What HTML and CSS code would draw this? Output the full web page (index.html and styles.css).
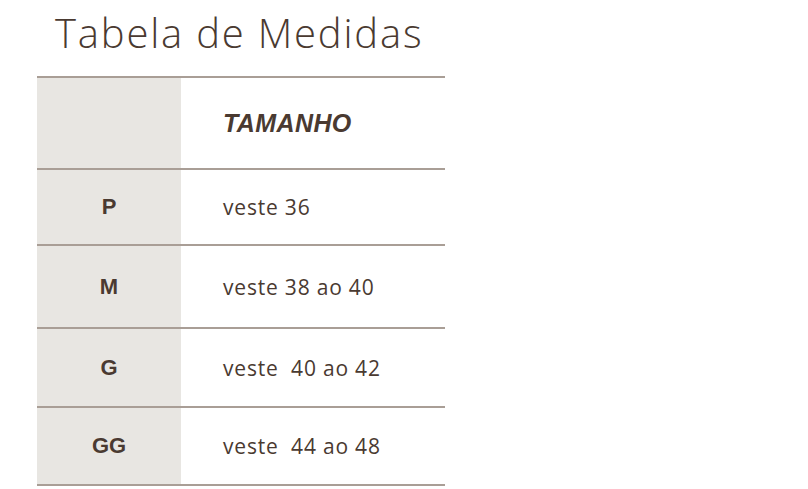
FILE: index.html
```html
<!DOCTYPE html>
<html lang="pt">
<head>
<meta charset="utf-8">
<title>Tabela de Medidas</title>
<link rel="stylesheet" href="styles.css">
</head>
<body>
<div class="page">
  <h1 class="title">Tabela de Medidas</h1>
  <div class="table">
    <div class="row row-head">
      <div class="cell-size"></div>
      <div class="cell-value head">TAMANHO</div>
    </div>
    <div class="row row-p">
      <div class="cell-size">P</div>
      <div class="cell-value">veste 36</div>
    </div>
    <div class="row row-m">
      <div class="cell-size">M</div>
      <div class="cell-value">veste 38 ao 40</div>
    </div>
    <div class="row row-g">
      <div class="cell-size">G</div>
      <div class="cell-value">veste&nbsp; 40 ao 42</div>
    </div>
    <div class="row row-gg">
      <div class="cell-size">GG</div>
      <div class="cell-value">veste&nbsp; 44 ao 48</div>
    </div>
  </div>
</div>
</body>
</html>
```
FILE: styles.css
```css
html, body {
  margin: 0;
  padding: 0;
  background: #ffffff;
}
.page {
  padding-left: 37px;
  width: 408px;
  color: #4a3a31;
}
.title {
  margin: 7px 0 0 18px;
  height: 69px;
  font-family: "Open Sans", sans-serif;
  font-weight: 300;
  font-size: 40px;
  line-height: 52px;
  letter-spacing: 1.8px;
  color: #4a3a31;
}
.table {
  display: flex;
  flex-direction: column;
  border-bottom: 2px solid #a99e96;
}
.row {
  display: grid;
  grid-template-columns: 144px 1fr;
  border-top: 2px solid #a99e96;
}
.row-head { height: 90px; }
.row-p { height: 74px; }
.row-m { height: 81px; }
.row-g { height: 77px; }
.row-gg { height: 76px; }
.cell-size {
  background: #e8e6e2;
  display: flex;
  align-items: center;
  justify-content: center;
  font-family: "Liberation Sans", Arial, sans-serif;
  font-weight: bold;
  font-size: 22px;
  color: #4a3a31;
}
.cell-value {
  display: flex;
  align-items: center;
  padding-left: 42px;
  font-family: "Open Sans", sans-serif;
  font-size: 21px;
  letter-spacing: 0.8px;
  color: #4a3a31;
}
.cell-value.head {
  font-family: "Liberation Sans", Arial, sans-serif;
  font-weight: bold;
  font-style: italic;
  font-size: 25px;
  letter-spacing: 0.4px;
}
```
